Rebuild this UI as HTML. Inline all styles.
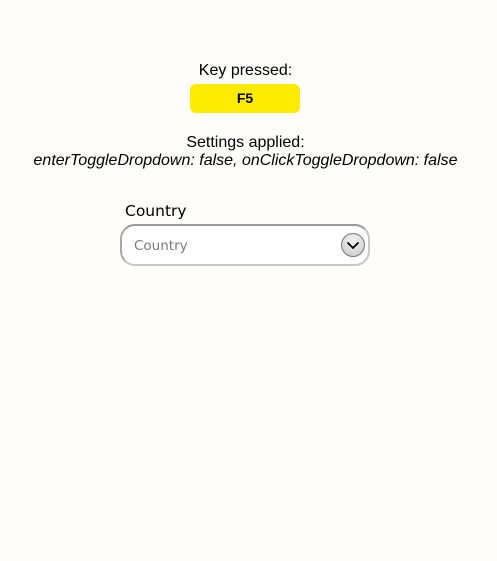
<!DOCTYPE html>
<html><head><style>
body{margin:0;width:497px;height:561px;background:#fffcfc;font-family:"Liberation Sans",sans-serif;position:relative;overflow:hidden}
.t{position:absolute;left:-3px;width:497px;text-align:center;font-size:16px;color:#000}
.key{position:absolute;left:190px;top:84px;width:110px;height:29px;background:#ffeb00;border-radius:6px;font-weight:bold;font-size:14px;text-align:center;line-height:29px}
.lbl{position:absolute;left:125px;top:202px;font-family:"DejaVu Sans",sans-serif;font-size:15.5px;color:#000}
.box{position:absolute;left:120px;top:224px;width:246px;height:38px;border:2px solid #c8c8c8;border-top-color:#9a9a9a;border-left-color:#a8a8a8;border-radius:15px;background:#fff}
.ph{position:absolute;left:12px;top:12px;font-family:"DejaVu Sans",sans-serif;font-size:13.5px;color:#7a7a7a}
.btn{position:absolute;left:219px;top:7px;width:22px;height:22px;border-radius:50%;border:1px solid #777;background:radial-gradient(circle at 50% 30%,#f2f2f2,#c8c8c8)}
</style></head><body>
<div class="t" style="top:62px">Key pressed:</div>
<div class="key">F5</div>
<div class="t" style="top:134px">Settings applied:</div>
<div class="t" style="top:152px;font-style:italic">enterToggleDropdown: false, onClickToggleDropdown: false</div>
<div class="lbl">Country</div>
<div class="box"><div class="ph">Country</div>
<div class="btn"><svg width="22" height="22" viewBox="0 0 22 22"><path d="M5.5 8.5 L11 14 L16.5 8.5" fill="none" stroke="#000" stroke-width="1.8"/></svg></div></div>
</body></html>
